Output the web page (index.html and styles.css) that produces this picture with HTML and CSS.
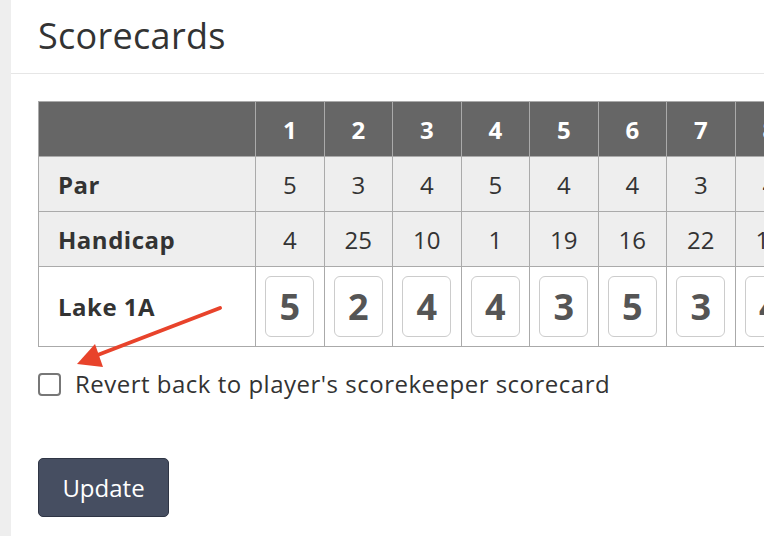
FILE: index.html
```html
<!DOCTYPE html>
<html lang="en">
<head>
    <meta charset="UTF-8">
    <title>Scorecards</title>
    <link rel="stylesheet" href="styles.css">
</head>
<body>

    <main class="panel">

        <header class="panelHead">
            <h1 class="title">Scorecards</h1>
        </header>

        <section class="panelBody">

            <table class="card">
                <colgroup>
                    <col class="colName">
                    <col class="colHole"><col class="colHole"><col class="colHole">
                    <col class="colHole"><col class="colHole"><col class="colHole">
                    <col class="colHole"><col class="colHole"><col class="colHole">
                </colgroup>
                <tr class="holes">
                    <th></th>
                    <th>1</th><th>2</th><th>3</th><th>4</th><th>5</th>
                    <th>6</th><th>7</th><th>8</th><th>9</th>
                </tr>
                <tr class="info">
                    <th>Par</th>
                    <td>5</td><td>3</td><td>4</td><td>5</td><td>4</td>
                    <td>4</td><td>3</td><td>4</td><td>4</td>
                </tr>
                <tr class="info">
                    <th>Handicap</th>
                    <td>4</td><td>25</td><td>10</td><td>1</td><td>19</td>
                    <td>16</td><td>22</td><td>13</td><td>7</td>
                </tr>
                <tr class="player">
                    <th>Lake 1A</th>
                    <td><input class="score" type="text" value="5"></td>
                    <td><input class="score" type="text" value="2"></td>
                    <td><input class="score" type="text" value="4"></td>
                    <td><input class="score" type="text" value="4"></td>
                    <td><input class="score" type="text" value="3"></td>
                    <td><input class="score" type="text" value="5"></td>
                    <td><input class="score" type="text" value="3"></td>
                    <td><input class="score" type="text" value="4"></td>
                    <td><input class="score" type="text" value="4"></td>
                </tr>
            </table>

            <label class="revert">
                <span class="box"></span>
                Revert back to player's scorekeeper scorecard
            </label>

            <button class="update">Update</button>

            <!-- annotation arrow -->
            <svg class="arrow" width="160" height="80" viewBox="0 0 160 80">
                <line x1="149" y1="3" x2="24" y2="51" stroke="#e8432b" stroke-width="4" stroke-linecap="round"/>
                <polygon points="6,59 24,39 32,62" fill="#e8432b"/>
            </svg>

        </section>

    </main>

</body>
</html>
```

FILE: styles.css
```css
*{ padding: 0; margin: 0; box-sizing: border-box; }

:root{
    --back: #eeeeee;
    --white: #ffffff;
    --text: #333333;
    --head: #666666;
    --line: #aaaaaa;
    --button: #464e61;
}

body{
    background-color: var(--back);
    font-family: "Open Sans", "Liberation Sans", sans-serif;
    color: var(--text);
    overflow: hidden;
}

/*   PANEL   */

.panel{
    margin-left: 11px;
    min-height: 536px;
    background-color: var(--white);
}
.panelHead{
    padding: 16px 27px 17px;
    border-bottom: 1px solid #e6e6e6;
}
.title{
    font-size: 36px;
    font-weight: 400;
    line-height: 40px;
    letter-spacing: 0.3px;
}
.panelBody{
    position: relative;
    padding: 27px 27px 40px;
}

/*   SCORECARD TABLE   */

.card{
    border-collapse: collapse;
    table-layout: fixed;
    width: 834px;
    font-size: 24px;
}
.colName{ width: 217px; }
.colHole{ width: 68.5px; }

.card th, .card td{
    border: 1px solid var(--line);
    text-align: center;
}
.holes th{
    height: 55px;
    background-color: var(--head);
    color: var(--white);
    font-weight: 700;
}
.info th, .info td{
    height: 55px;
    background-color: var(--back);
}
.info td{ font-weight: 400; }
.info th, .player th{
    text-align: left;
    padding-left: 19px;
    font-weight: 700;
    letter-spacing: 0.5px;
}
.player th, .player td{
    height: 80px;
    background-color: var(--white);
}
.score{
    display: block;
    margin: 0 auto;
    width: 49px;
    height: 61px;
    border: 1px solid #cccccc;
    border-radius: 6px;
    background-color: var(--white);
    font-family: inherit;
    font-size: 36px;
    font-weight: 700;
    color: #555555;
    text-align: center;
}

/*   FORM   */

.revert{
    display: flex;
    align-items: center;
    gap: 14px;
    margin-top: 24px;
    font-size: 24px;
    line-height: 26px;
    letter-spacing: 0.5px;
}
.box{
    width: 23px;
    height: 23px;
    border: 2px solid #777777;
    border-radius: 4px;
}

.update{
    margin-top: 61px;
    width: 131px;
    height: 59px;
    background-color: var(--button);
    border: 1px solid #2f3545;
    border-radius: 5px;
    color: var(--white);
    font-family: inherit;
    font-size: 24px;
}

.arrow{
    position: absolute;
    left: 60px;
    top: 231px;
}
```
